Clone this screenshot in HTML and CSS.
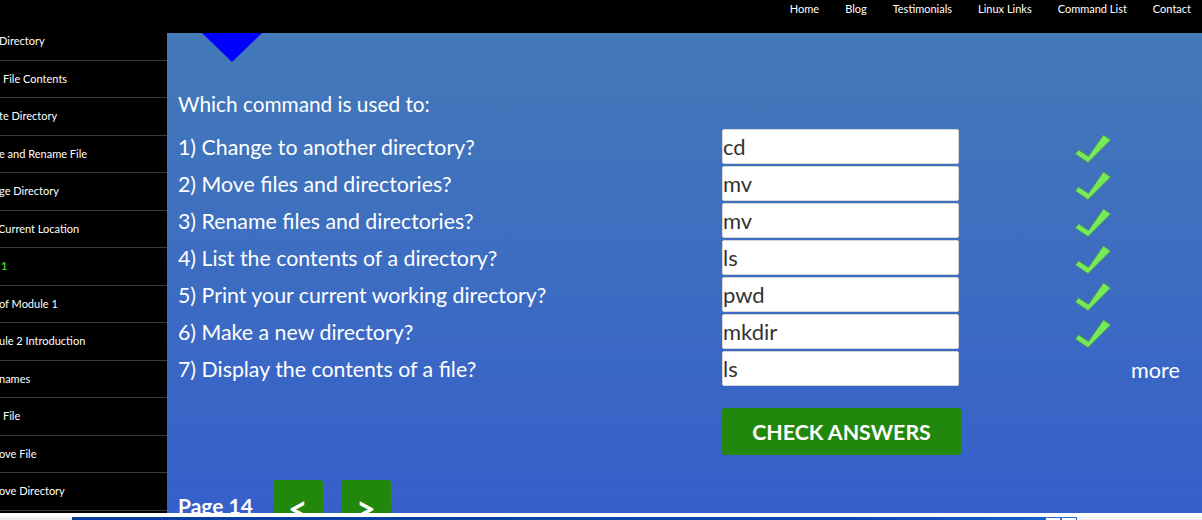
FILE: index.html
```html
<!DOCTYPE html>
<html>
<head>
<meta charset="utf-8">
<title>Quiz - Page 14</title>
<link rel="stylesheet" href="styles.css">
</head>
<body>
<header class="topbar">
  <nav class="nav">
    <a href="#">Home</a>
    <a href="#">Blog</a>
    <a href="#">Testimonials</a>
    <a href="#">Linux Links</a>
    <a href="#">Command List</a>
    <a href="#">Contact</a>
  </nav>
</header>
<div class="layout">
  <aside class="sidebar">
    <ul class="side-list">
      <li>Directory</li>
      <li class="ind">File Contents</li>
      <li>te Directory</li>
      <li>e and Rename File</li>
      <li>ge Directory</li>
      <li class="cut">Current Location</li>
      <li class="active">1</li>
      <li>of Module 1</li>
      <li>ule 2 Introduction</li>
      <li>names</li>
      <li class="ind">File</li>
      <li>ove File</li>
      <li>ove Directory</li>
      <li></li>
    </ul>
  </aside>
  <main class="main">
    <div class="arrow"></div>
    <h2 class="heading">Which command is used to:</h2>
    <div class="quiz">
      <div class="q">1) Change to another directory?</div>
      <input class="ans" type="text" value="cd">
      <div class="mark"><svg viewBox="0 0 36 29" width="36" height="29"><path d="M0.5 20 L3.5 16 L13.5 22.5 L28.5 1 L35.5 6 L13 28.5 Z"/></svg></div>

      <div class="q">2) Move files and directories?</div>
      <input class="ans" type="text" value="mv">
      <div class="mark"><svg viewBox="0 0 36 29" width="36" height="29"><path d="M0.5 20 L3.5 16 L13.5 22.5 L28.5 1 L35.5 6 L13 28.5 Z"/></svg></div>

      <div class="q">3) Rename files and directories?</div>
      <input class="ans" type="text" value="mv">
      <div class="mark"><svg viewBox="0 0 36 29" width="36" height="29"><path d="M0.5 20 L3.5 16 L13.5 22.5 L28.5 1 L35.5 6 L13 28.5 Z"/></svg></div>

      <div class="q">4) List the contents of a directory?</div>
      <input class="ans" type="text" value="ls">
      <div class="mark"><svg viewBox="0 0 36 29" width="36" height="29"><path d="M0.5 20 L3.5 16 L13.5 22.5 L28.5 1 L35.5 6 L13 28.5 Z"/></svg></div>

      <div class="q">5) Print your current working directory?</div>
      <input class="ans" type="text" value="pwd">
      <div class="mark"><svg viewBox="0 0 36 29" width="36" height="29"><path d="M0.5 20 L3.5 16 L13.5 22.5 L28.5 1 L35.5 6 L13 28.5 Z"/></svg></div>

      <div class="q">6) Make a new directory?</div>
      <input class="ans" type="text" value="mkdir">
      <div class="mark"><svg viewBox="0 0 36 29" width="36" height="29"><path d="M0.5 20 L3.5 16 L13.5 22.5 L28.5 1 L35.5 6 L13 28.5 Z"/></svg></div>

      <div class="q">7) Display the contents of a file?</div>
      <input class="ans" type="text" value="ls">
      <div class="more">more</div>
    </div>
    <button class="check">CHECK ANSWERS</button>
    <div class="pager">
      <span class="page-label">Page 14</span>
      <button class="pg">&lt;</button>
      <button class="pg">&gt;</button>
    </div>
  </main>
</div>
<footer class="strip">
  <div class="strip-bar">
    <span class="s-left"></span>
    <span class="s-blue"></span>
    <span class="s-box"></span>
    <span class="s-box"></span>
    <span class="s-rest"></span>
  </div>
</footer>
</body>
</html>
```

FILE: styles.css
```css
* { box-sizing: border-box; }
html, body { margin: 0; padding: 0; }
body {
  width: 1202px;
  height: 520px;
  overflow: hidden;
  font-family: Lato, "Liberation Sans", sans-serif;
  background: #000;
  color: #fff;
}
.topbar {
  height: 33px;
  background: #000;
  position: relative;
  z-index: 2;
}
.nav {
  display: flex;
  justify-content: flex-end;
  gap: 26px;
  padding-right: 11px;
  line-height: 18px;
  font-size: 11px;
}
.nav a { color: #fff; text-decoration: none; }

.layout {
  display: flex;
  height: 480px;
}
.sidebar {
  width: 167px;
  flex: none;
  background: #000;
  overflow: hidden;
}
.side-list {
  list-style: none;
  margin: -10px 0 0 0;
  padding: 0;
}
.side-list li {
  height: 37.5px;
  line-height: 36.5px;
  border-bottom: 1px solid #3a3a3a;
  font-size: 11px;
  color: #fff;
  white-space: nowrap;
  text-indent: -1px;
}
.side-list li.ind { text-indent: 3px; }
.side-list li.cut { text-indent: -2px; }
.side-list li.active { color: #3fcc2a; font-weight: bold; text-indent: 1px; }

.main {
  flex: 1;
  height: 480px;
  overflow: hidden;
  background: linear-gradient(#437ab8, #365fcb);
  padding-left: 11px;
}
.arrow {
  width: 0;
  height: 0;
  margin-left: 24px;
  border-left: 30px solid transparent;
  border-right: 30px solid transparent;
  border-top: 29px solid #0000ff;
}
.heading {
  margin: 30px 0 13px 0;
  font-size: 20.8px;
  font-weight: normal;
  line-height: 24px;
}
.quiz {
  display: grid;
  grid-template-columns: 544px 237px 1fr;
  grid-auto-rows: 35px;
  row-gap: 2px;
  align-items: center;
}
.q {
  font-size: 21.33px;
  line-height: 24px;
}
.ans {
  width: 237px;
  height: 35px;
  border: 1px solid #d6d6d6;
  border-radius: 2px;
  background: #fff;
  font-family: Lato, "Liberation Sans", sans-serif;
  font-size: 22px;
  color: #333;
  padding: 0;
  margin: 0;
  outline: none;
}
.mark {
  padding-left: 116px;
  height: 29px;
  margin-top: 3px;
}
.mark svg { display: block; }
.mark path {
  fill: #77ea5a;
  stroke: #4f9f3c;
  stroke-width: 0.8;
  stroke-linejoin: miter;
}
.more {
  padding-left: 172px;
  font-size: 21.6px;
  line-height: 24px;
  margin-top: 2px;
}
.check {
  display: block;
  margin-top: 22px;
  margin-left: 544px;
  width: 239px;
  height: 47px;
  border: none;
  border-radius: 3px;
  background: #22870d;
  color: #fff;
  font-family: Lato, "Liberation Sans", sans-serif;
  font-weight: bold;
  font-size: 21.33px;
  padding: 0;
}
.pager {
  display: flex;
  align-items: flex-start;
  margin-top: 25px;
}
.page-label {
  font-size: 21px;
  font-weight: bold;
  line-height: 24px;
  margin-top: 14px;
  margin-right: 20px;
}
.pg {
  width: 50px;
  height: 50px;
  border: none;
  border-radius: 3px;
  background: #22870d;
  color: #fff;
  font-family: Lato, "Liberation Sans", sans-serif;
  font-weight: bold;
  font-size: 34px;
  line-height: 1;
  padding: 6px 0 0 0;
  margin-right: 18px;
}

.strip {
  height: 7px;
  background: #fff;
  display: flex;
  flex-direction: column;
  justify-content: flex-end;
}
.strip-bar {
  display: flex;
  height: 3px;
}
.s-left { width: 72px; background: #eeeeee; }
.s-blue { width: 973px; background: linear-gradient(90deg, #0a3c9c, #0c47b0 80%, #1560c8); }
.s-box { width: 16px; background: #fff; border: 1px solid #2a6fd6; border-bottom: none; }
.s-rest { flex: 1; background: #f4f4f4; }
```
